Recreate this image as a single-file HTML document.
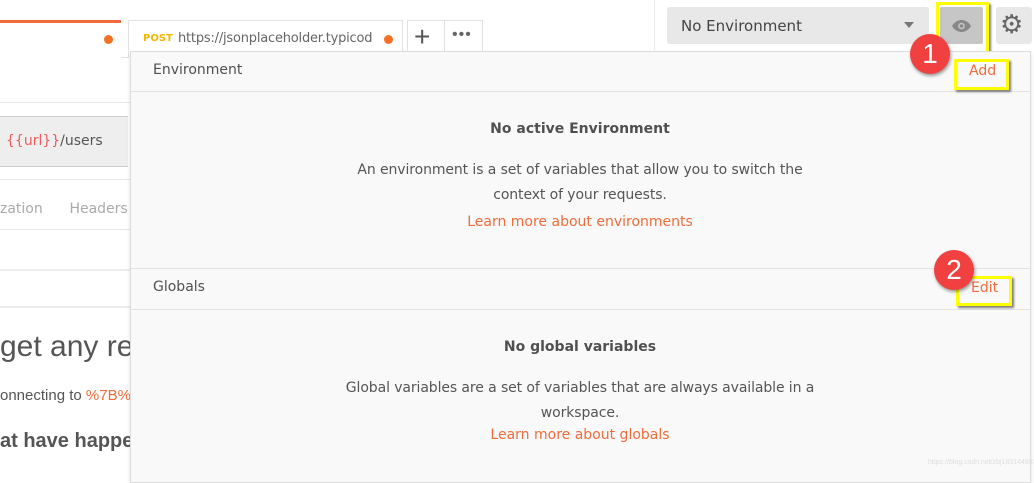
<!DOCTYPE html>
<html><head><style>
body{margin:0;width:1034px;height:475px;overflow:hidden;background:#fff;font-family:"Liberation Sans",sans-serif;position:relative;color:#505050}
.a{position:absolute}
.o{font-family:"DejaVu Sans","Liberation Sans",sans-serif}
</style></head><body>
<div class="a" style="left:0;top:20px;width:121px;height:38px;border-top:3px solid #f26b3a;background:#fff"></div>
<div class="a" style="left:104px;top:35px;width:9px;height:9px;border-radius:50%;background:#f47023"></div>
<div class="a" style="left:121px;top:57px;width:540px;height:1px;background:#e0e0e0"></div>
<div class="a" style="left:128px;top:20px;width:273px;height:37px;border:1px solid #e2e2e2;border-bottom:none;background:#fff"></div>
<div class="a o" style="left:143px;top:33px;font-size:10px;font-weight:bold;color:#f5b400">POST</div>
<div class="a o" style="left:178px;top:31px;font-size:13px;color:#666;letter-spacing:-0.2px">https://jsonplaceholder.typicod</div>
<div class="a" style="left:384px;top:35px;width:9px;height:9px;border-radius:50%;background:#f47023"></div>
<div class="a" style="left:407px;top:20px;width:74px;height:33px;border:1px solid #e2e2e2;background:#fff"></div>
<div class="a" style="left:444px;top:20px;width:1px;height:33px;background:#e2e2e2"></div>
<div class="a" style="left:414px;top:21px;font-size:28px;color:#555">+</div>
<div class="a" style="left:452px;top:26px;font-size:16px;color:#666;letter-spacing:1px">•••</div>
<div class="a" style="left:654px;top:0;width:1px;height:50px;background:#e6e6e6"></div>
<div class="a" style="left:667px;top:7px;width:262px;height:37px;background:#e8e8e8;border-radius:3px"></div>
<div class="a o" style="left:681px;top:17px;font-size:15px;color:#444">No Environment</div>
<div class="a" style="left:904px;top:22px;width:0;height:0;border-left:5px solid transparent;border-right:5px solid transparent;border-top:6px solid #777"></div>
<div class="a" style="left:940px;top:7px;width:43px;height:37px;background:#c6c6c6;border-radius:2px"></div>
<div class="a" style="left:936px;top:2px;width:47px;height:46px;border:3px solid #ffff00;box-shadow:2px 2px 2px rgba(0,0,0,.5)"></div>
<svg class="a" style="left:951px;top:19px" width="21" height="14" viewBox="0 0 21 14"><path d="M1 7C4 2 8 1 10.5 1S17 2 20 7C17 12 13 13 10.5 13S4 12 1 7Z" fill="#888"/><circle cx="10.5" cy="7" r="3.3" fill="#c6c6c6"/><circle cx="10.5" cy="7" r="1.8" fill="#888"/></svg>
<div class="a" style="left:996px;top:7px;width:36px;height:37px;background:#e8e8e8;border-radius:3px"></div>
<div class="a" style="left:1000px;top:9px;font-size:26px;color:#666">⚙</div>
<div class="a" style="left:0;top:116px;width:128px;height:49px;background:#eee;border-top:1px solid #d0d0d0;border-bottom:1px solid #ccc"></div>
<div class="a o" style="left:6px;top:133px;font-size:14px;color:#555"><span style="color:#f05a5a">{{url}}</span>/users</div>
<div class="a" style="left:0;top:102px;width:130px;height:1px;background:#e6e6e6"></div>
<div class="a" style="left:0;top:179px;width:130px;height:1px;background:#e6e6e6"></div>
<div class="a o" style="left:0;top:201px;font-size:14px;color:#aaa">zation&nbsp;&nbsp;&nbsp;&nbsp;&nbsp;&nbsp;Headers</div>
<div class="a" style="left:0;top:229px;width:130px;height:1px;background:#e6e6e6"></div>
<div class="a" style="left:0;top:269px;width:130px;height:2px;background:#ececec"></div>
<div class="a" style="left:0;top:306px;width:130px;height:2px;background:#ececec"></div>
<div class="a" style="left:0;top:330px;font-size:30px;color:#555">get any re</div>
<div class="a" style="left:0;top:387px;font-size:15px;color:#555">onnecting to <span style="color:#f26b3a">%7B%7B</span></div>
<div class="a" style="left:0;top:430px;font-size:20px;font-weight:bold;color:#555">at have happe</div>
<div class="a" style="left:130px;top:51px;width:899px;height:430px;background:#f9f9f9;border:1px solid #ddd;box-shadow:0 2px 4px rgba(0,0,0,.12)"></div>
<div class="a" style="left:131px;top:91px;width:899px;height:1px;background:#e3e3e3"></div>
<div class="a" style="left:131px;top:268px;width:899px;height:1px;background:#e3e3e3"></div>
<div class="a" style="left:131px;top:309px;width:899px;height:1px;background:#e3e3e3"></div>
<div class="a o" style="left:153px;top:62px;font-size:14px;color:#505050">Environment</div>
<div class="a o" style="left:153px;top:279px;font-size:14px;color:#505050">Globals</div>
<div class="a o" style="left:130px;width:900px;top:121px;text-align:center;font-size:14px;font-weight:bold;color:#505050">No active Environment</div>
<div class="a o" style="left:130px;width:900px;top:158px;text-align:center;font-size:14px;line-height:25px;color:#555;letter-spacing:-0.1px">An environment is a set of variables that allow you to switch the<br>context of your requests.</div>
<div class="a o" style="left:130px;width:900px;top:214px;text-align:center;font-size:14px;color:#f26b3a">Learn more about environments</div>
<div class="a o" style="left:130px;width:900px;top:339px;text-align:center;font-size:14px;font-weight:bold;color:#505050">No global variables</div>
<div class="a o" style="left:130px;width:900px;top:376px;text-align:center;font-size:14px;line-height:25px;color:#555;letter-spacing:-0.1px">Global variables are a set of variables that are always available in a<br>workspace.</div>
<div class="a o" style="left:130px;width:900px;top:427px;text-align:center;font-size:14px;color:#f26b3a">Learn more about globals</div>
<div class="a" style="left:954px;top:59px;width:49px;height:25px;border:3px solid #ffff00;box-shadow:2px 2px 2px rgba(0,0,0,.5)"></div>
<div class="a o" style="left:969px;top:63px;font-size:14px;color:#f26b3a">Add</div>
<div class="a" style="left:956px;top:276px;width:50px;height:24px;border:3px solid #ffff00;box-shadow:2px 2px 2px rgba(0,0,0,.5)"></div>
<div class="a o" style="left:971px;top:280px;font-size:14px;color:#f26b3a">Edit</div>
<div class="a" style="left:910px;top:34px;width:40px;height:40px;border-radius:50%;background:#f04040;color:#fff;font-size:28px;text-align:center;line-height:40px;box-shadow:1px 2px 3px rgba(0,0,0,.4)">1</div>
<div class="a" style="left:934px;top:250px;width:40px;height:40px;border-radius:50%;background:#f04040;color:#fff;font-size:28px;text-align:center;line-height:40px;box-shadow:1px 2px 3px rgba(0,0,0,.4)">2</div>
<div class="a" style="left:928px;top:459px;font-size:7px;color:#ddd">https://blog.csdn.net/zbj18314469395</div>
</body></html>
